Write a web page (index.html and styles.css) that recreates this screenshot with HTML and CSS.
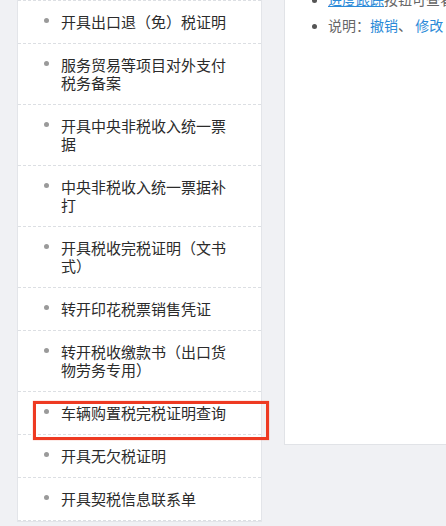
FILE: index.html
```html
<!DOCTYPE html>
<html lang="zh-CN">
<head>
    <meta charset="UTF-8">
    <meta name="viewport" content="width=device-width, initial-scale=1.0">
    <title>税务证明开具</title>
    <link rel="stylesheet" href="styles.css">
</head>
<body>
    <div class="page">
        <div class="side-menu">
            <ul class="menu-list">
                <li><span class="dot"></span><span class="menu-text">开具出口退（免）税证明</span></li>
                <li><span class="dot"></span><span class="menu-text">服务贸易等项目对外支付税务备案</span></li>
                <li><span class="dot"></span><span class="menu-text">开具中央非税收入统一票据</span></li>
                <li><span class="dot"></span><span class="menu-text">中央非税收入统一票据补打</span></li>
                <li><span class="dot"></span><span class="menu-text">开具税收完税证明（文书式）</span></li>
                <li><span class="dot"></span><span class="menu-text">转开印花税票销售凭证</span></li>
                <li><span class="dot"></span><span class="menu-text">转开税收缴款书（出口货物劳务专用）</span></li>
                <li class="marked">
                    <span class="dot"></span><span class="menu-text">车辆购置税完税证明查询</span>
                    <div class="highlight-box"></div>
                </li>
                <li><span class="dot"></span><span class="menu-text">开具无欠税证明</span></li>
                <li><span class="dot"></span><span class="menu-text">开具契税信息联系单</span></li>
            </ul>
        </div>
        <div class="main-panel">
            <ul class="tips">
                <li><a href="#" class="link underline">进度跟踪</a>按钮可查看办理进度</li>
                <li>说明：<a href="#" class="link">撤销</a>、 <a href="#" class="link">修改</a></li>
            </ul>
        </div>
    </div>
</body>
</html>
```

FILE: styles.css
```css
html, body {
    margin: 0;
    padding: 0;
    background: #f0f1f4;
    overflow: hidden;
}
body {
    font-family: "Noto Sans CJK SC", "Noto Sans", sans-serif;
    color: #2b2b2b;
}
.page {
    display: flex;
    align-items: flex-start;
    gap: 22px;
    padding-left: 17px;
    width: 700px;
}
.side-menu {
    width: 243px;
    background: #fff;
    border: 1px solid #e3e5e9;
    border-top: none;
    flex-shrink: 0;
}
.menu-list {
    list-style: none;
    margin: 0;
    padding: 0;
    border-top: 1px dashed #dcdfe3;
}
.menu-list li {
    display: flex;
    align-items: flex-start;
    padding: 12px 30px 12px 26px;
    border-bottom: 1px dashed #dcdfe3;
    font-size: 15px;
    line-height: 18px;
}
.dot {
    width: 5px;
    height: 5px;
    border-radius: 50%;
    background: #9a9a9a;
    margin: 5px 12px 0 0;
    flex-shrink: 0;
}
.menu-text {
    flex: 1;
}
.marked {
    position: relative;
}
.highlight-box {
    position: absolute;
    left: 15px;
    top: 9px;
    width: 230px;
    height: 33px;
    border: 3px solid #ee3a22;
    box-shadow: 0 0 1px rgba(238, 58, 34, 0.6);
}
.main-panel {
    width: 320px;
    height: 444px;
    background: #fff;
    border: 1px solid #e1e3e7;
    border-top: none;
    overflow: hidden;
}
.tips {
    margin: -14px 0 0;
    padding: 0 0 0 43px;
    font-size: 14px;
    line-height: 26px;
    color: #666;
    white-space: nowrap;
}
.tips li::marker {
    color: #555;
    font-size: 12px;
}
.link {
    color: #2b8ad8;
    text-decoration: none;
}
.link.underline {
    text-decoration: underline;
}
```
